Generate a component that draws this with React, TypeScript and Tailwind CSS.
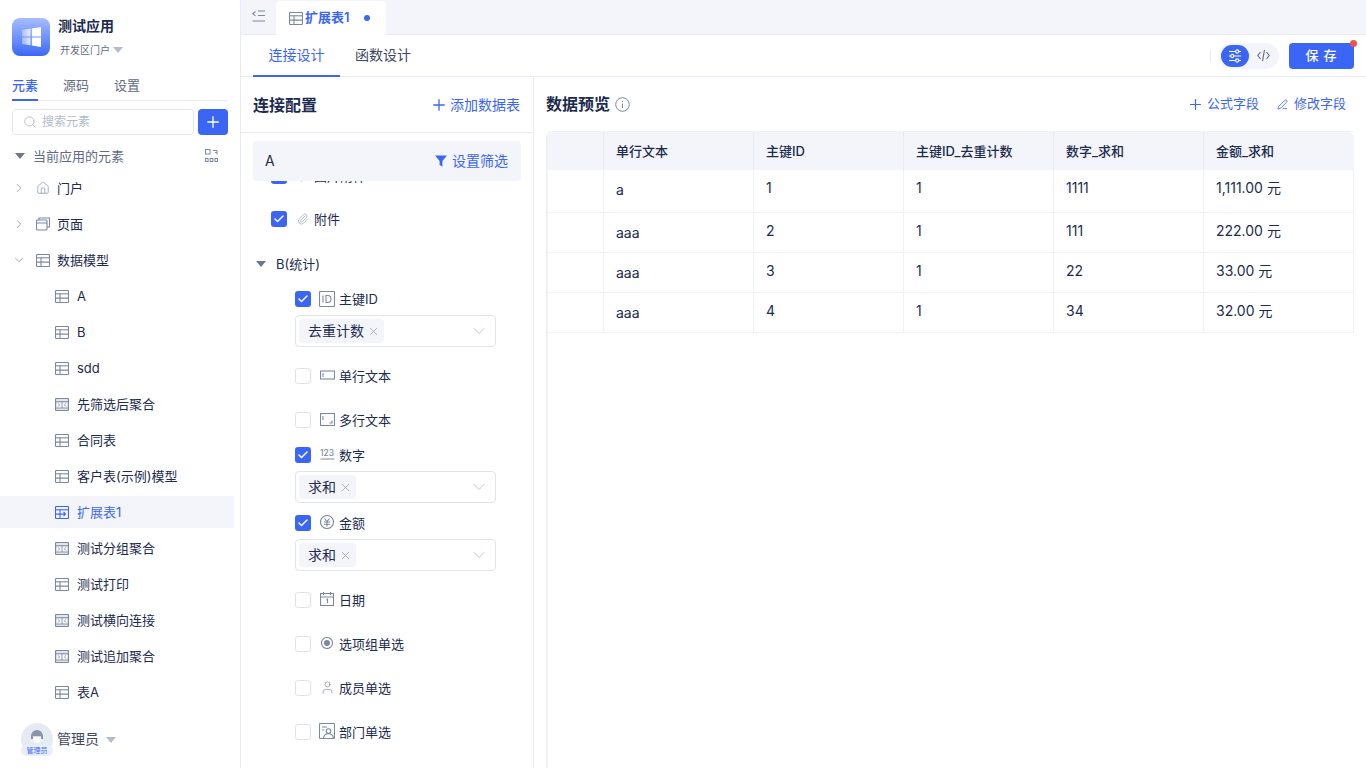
import { Check, ChevronDown, ChevronRight, Home, Paperclip, PenLine, Plus, Search, User, X } from "lucide-react";
import type { ReactNode } from "react";

type TableKind = "plain" | "merge" | "extend";

// small table glyph used all over the element tree
function TableIcon({ kind = "plain", className = "text-[#7c88a3]" }: { kind?: TableKind; className?: string }) {
  return (
    <svg width="14" height="13" viewBox="0 0 14 13" fill="none" stroke="currentColor" strokeWidth="1.1" className={className}>
      {kind === "merge" && <path d="M0 0h14v13H0z" fill="currentColor" fillOpacity="0.22" stroke="none" />}
      {kind === "merge" && <path d="M2 4h10v6H2z" fill="#fff" stroke="none" />}
      <rect x="0.5" y="0.5" width="13" height="12" rx="1" />
      <path d="M0.5 3.8h13" />
      {kind === "plain" && <path d="M5 3.8v8.7M0.5 8.1h13" />}
      {kind === "merge" && <path d="M0.5 10h13M3 5.3l1.6 1.6L3 8.5M7 3.8v6.2M11 5.3L9.4 6.9 11 8.5" strokeWidth="0.9" />}
      {kind === "extend" && <path d="M5 3.8v8.7M0.5 8.1h4.5M8.5 6l2 2.1-2 2.1M5 8.1h5.5" />}
    </svg>
  );
}

function Caret({ className = "" }: { className?: string }) {
  return (
    <svg width="10" height="6" viewBox="0 0 10 6" className={className}>
      <path d="M0 0h10L5 6z" fill="currentColor" />
    </svg>
  );
}

function WindowsLogo() {
  return (
    <div className="flex h-[38px] w-[38px] items-center justify-center rounded-[8px] bg-gradient-to-b from-[#a9bcfb] to-[#3d66f6]">
      <svg width="19" height="20" viewBox="0 0 19 20">
        <defs>
          <linearGradient id="win" x1="0" x2="1" y1="0" y2="0">
            <stop offset="0" stopColor="#fff" stopOpacity="0.35" />
            <stop offset="0.6" stopColor="#fff" />
          </linearGradient>
        </defs>
        <path d="M0 3l8.5-1.2v7.6H0zM9.8 1.6L19 0v9.4H9.8zM0 10.6h8.5v7.6L0 17zM9.8 10.6H19V20l-9.2-1.6z" fill="url(#win)" />
      </svg>
    </div>
  );
}

function PagesIcon() {
  return (
    <svg width="14" height="14" viewBox="0 0 14 14" fill="none" stroke="#7c88a3" strokeWidth="1.1">
      <rect x="0.5" y="3" width="10.5" height="10" rx="1" />
      <path d="M0.5 6h10.5M3 3V1h10.5v9H11" />
    </svg>
  );
}

function LayoutToggleIcon() {
  return (
    <svg width="13" height="14" viewBox="0 0 13 14" fill="none" stroke="#7c88a3" strokeWidth="1">
      <rect x="0.5" y="0.5" width="4.5" height="4.5" />
      <path d="M8 1.5h4v4M10 3.5h2" />
      <rect x="0.5" y="9.5" width="2.6" height="3" />
      <rect x="5.2" y="9.5" width="2.6" height="3" />
      <rect x="9.9" y="9.5" width="2.6" height="3" />
    </svg>
  );
}

function CollapseIcon() {
  return (
    <svg width="13" height="12" viewBox="0 0 13 12" fill="none" stroke="#7c88a3" strokeWidth="1.1">
      <path d="M6 1h7M6 5.5h7M0.5 11h12.5M3.5 1.5L0.8 3.7l2.7 2.2" />
    </svg>
  );
}

function SlidersIcon() {
  return (
    <svg width="14" height="14" viewBox="0 0 14 14" fill="none" stroke="currentColor" strokeWidth="1.1">
      <path d="M1 2.5h6.5M11 2.5h2M1 7h1.5M6 7h7M1 11.5h6.5M11 11.5h2" />
      <circle cx="9.2" cy="2.5" r="1.6" />
      <circle cx="4.2" cy="7" r="1.6" />
      <circle cx="9.2" cy="11.5" r="1.6" />
    </svg>
  );
}

function CodeIcon() {
  return (
    <svg width="13" height="13" viewBox="0 0 13 13" fill="none" stroke="#5f6b85" strokeWidth="1.1">
      <path d="M3.5 3L0.8 6.5 3.5 10M9.5 3l2.7 3.5L9.5 10M7.5 0.8l-2 11.4" />
    </svg>
  );
}

function Avatar() {
  return (
    <div className="relative h-8 w-8 rounded-full bg-[#e6eaf3]">
      <svg width="14" height="14" viewBox="0 0 14 14" className="absolute left-[9px] top-[6px]">
        <path d="M1 7a6 6 0 0 1 12 0v3h-2V7.5H3V10H1z" fill="#8a94a8" />
        <path d="M3 7.5h8V10a4 4 0 0 1-8 0z" fill="#fbfbfd" />
      </svg>
      <div className="absolute bottom-[-1px] left-0 flex h-[11px] w-8 items-center justify-center rounded-[5px] bg-[#e8eefd] text-[7px] leading-none text-[#3b66f5]">
        管理员
      </div>
    </div>
  );
}

const models: { name: string; kind: TableKind; active?: boolean }[] = [
  { name: "A", kind: "plain" },
  { name: "B", kind: "plain" },
  { name: "sdd", kind: "plain" },
  { name: "先筛选后聚合", kind: "merge" },
  { name: "合同表", kind: "plain" },
  { name: "客户表(示例)模型", kind: "plain" },
  { name: "扩展表1", kind: "extend", active: true },
  { name: "测试分组聚合", kind: "merge" },
  { name: "测试打印", kind: "plain" },
  { name: "测试横向连接", kind: "merge" },
  { name: "测试追加聚合", kind: "merge" },
  { name: "表A", kind: "plain" },
];

function RootRow({ icon, label, open }: { icon: ReactNode; label: string; open?: boolean }) {
  return (
    <div className="mb-1 flex h-8 items-center text-[13px] text-[#1c2b4f]">
      <div className="flex w-[36px] justify-end pr-[10px] text-[#7c88a3]">
        {open ? <ChevronDown size={14} strokeWidth={1.2} /> : <ChevronRight size={14} strokeWidth={1.2} />}
      </div>
      <div className="flex w-[21px] justify-start">{icon}</div>
      <span className="pt-px">{label}</span>
    </div>
  );
}

function Sidebar() {
  return (
    <aside className="flex h-full w-[241px] shrink-0 flex-col overflow-hidden border-r border-[#e8ebf3] bg-white">
      <div className="flex h-[74px] gap-2 pl-3 pt-[18px]">
        <WindowsLogo />
        <div>
          <div className="text-sm leading-4 font-semibold text-[#1c2b4f]">测试应用</div>
          <div className="mt-[9px] flex items-center gap-[3px] pl-[2px] text-[10px] leading-[14px] text-[#5f6b85]">
            开发区门户
            <Caret className="text-[#b3bccd]" />
          </div>
        </div>
      </div>
      <div className="mx-3 flex h-[27px] w-[216px] gap-[25px] border-b border-[#e8ebf3] text-[13px] leading-[18px] text-[#5f6b85]">
        <div className="h-[27px] border-b-2 border-[#3b66f5] pt-[2px] font-medium text-[#3b66f5]">元素</div>
        <div className="pt-[2px]">源码</div>
        <div className="pt-[2px]">设置</div>
      </div>
      <div className="mx-3 mt-2 flex h-[26px] w-[216px] gap-1">
        <div className="flex flex-1 items-center gap-[5px] rounded-[4px] border border-[#e3e7f0] pl-[10px] text-xs text-[#b2bacb]">
          <Search size={14} strokeWidth={1.1} className="text-[#9aa4b9]" />
          搜索元素
        </div>
        <div className="flex w-[30px] items-center justify-center rounded-[4px] bg-[#3b66f5] text-white">
          <Plus size={18} strokeWidth={1.8} />
        </div>
      </div>
      <div className="mt-[5px] flex h-8 items-center pl-[15px] pr-[22px] text-[13px] text-[#5f6b85]">
        <Caret className="text-[#6b7790]" />
        <span className="ml-2 flex-1 pt-px">当前应用的元素</span>
        <LayoutToggleIcon />
      </div>
      <div className="w-[234px]">
        <RootRow icon={<Home size={14} strokeWidth={1.1} className="text-[#7c88a3]" />} label="门户" />
        <RootRow icon={<PagesIcon />} label="页面" />
        <RootRow icon={<TableIcon />} label="数据模型" open />
        {models.map((m) => (
          <div
            key={m.name}
            className={`mb-1 flex h-8 items-center gap-2 pl-[55px] text-[13px] ${m.active ? "bg-[#f3f5fa] text-[#3b66f5]" : "text-[#1c2b4f]"}`}
          >
            <TableIcon kind={m.kind} className={m.active ? "text-[#3b66f5]" : "text-[#7c88a3]"} />
            <span className="pt-px">{m.name}</span>
          </div>
        ))}
      </div>
      <div className="mt-[11px] flex items-center pl-[21px] text-sm text-[#3c4760]">
        <Avatar />
        <span className="ml-1">管理员</span>
        <Caret className="ml-[7px] mt-[2px] text-[#b3bccd]" />
      </div>
    </aside>
  );
}

function Checkbox({ checked }: { checked?: boolean }) {
  return checked ? (
    <div className="flex h-4 w-4 shrink-0 items-center justify-center rounded-[3px] bg-[#3b66f5] text-white">
      <Check size={12} strokeWidth={3} />
    </div>
  ) : (
    <div className="h-4 w-4 shrink-0 rounded-[3px] border border-[#dfe3ed] bg-white" />
  );
}

function FieldIcon({ name }: { name: string }) {
  const line = { fill: "none", stroke: "#7c88a3", strokeWidth: 1.1 };
  switch (name) {
    case "id":
      return (
        <svg width="16" height="16" viewBox="0 0 16 16" {...line} className="mb-[1px]">
          <rect x="0.5" y="0.5" width="15" height="15" rx="1" />
          <path d="M4 4.5v7M7 4.5v7h1.8a3.2 3.5 0 0 0 0-7z" />
        </svg>
      );
    case "single":
      return (
        <svg width="15" height="10" viewBox="0 0 15 10" {...line} className="mb-[2px]">
          <rect x="0.5" y="1" width="14" height="8" />
          <path d="M3 3v4" />
        </svg>
      );
    case "multi":
      return (
        <svg width="15" height="13" viewBox="0 0 15 13" {...line} className="mb-[2px]">
          <rect x="0.5" y="0.5" width="14" height="12" />
          <path d="M3 3v4M9.5 10H12V7.5" />
        </svg>
      );
    case "number":
      return (
        <svg width="15" height="12" viewBox="0 0 15 12" className="mb-[2px]">
          <text x="0" y="7.5" fontSize="8.5" fontWeight="500" fill="#7c88a3" fontFamily="Inter">123</text>
          <path d="M0.5 11h14" stroke="#7c88a3" />
        </svg>
      );
    case "money":
      return (
        <svg width="14" height="14" viewBox="0 0 14 14" {...line} className="mb-[2px]">
          <circle cx="7" cy="7" r="6.5" />
          <path d="M4.5 3.5L7 6.5l2.5-3M4 7h6M4 9.3h6M7 6.5V11.5" />
        </svg>
      );
    case "date":
      return (
        <svg width="14" height="14" viewBox="0 0 14 14" {...line} className="mb-[2px]">
          <rect x="0.5" y="1.5" width="13" height="12" />
          <path d="M0.5 5h13M3.5 0v3M10.5 0v3M6.5 8l1-.8v4" />
        </svg>
      );
    case "radio":
      return (
        <svg width="12" height="12" viewBox="0 0 12 12" {...line} className="mb-[2px]">
          <circle cx="6" cy="6" r="5.5" />
          <circle cx="6" cy="6" r="3" fill="#7c88a3" stroke="none" />
        </svg>
      );
    case "user":
      return <User size={15} strokeWidth={1.1} className="mb-[2px] text-[#7c88a3]" />;
    default:
      return (
        <svg width="16" height="16" viewBox="0 0 16 16" {...line} className="mb-[2px]">
          <rect x="0.5" y="0.5" width="15" height="15" rx="1" />
          <path d="M3 4h5M3 7h2" />
          <circle cx="9.5" cy="8" r="2.3" />
          <path d="M4.5 15c.4-2.8 2.2-4.3 5-4.3s4.6 1.5 5 4.3" />
        </svg>
      );
  }
}

function AggSelect({ tag }: { tag: string }) {
  return (
    <div className="mt-1 flex h-8 w-[201px] items-center justify-between rounded-[4px] border border-[#e0e4ee] bg-white pl-[3px] pr-[6px]">
      <div className="flex h-6 items-center gap-[3px] rounded-[4px] bg-[#f3f5fa] pl-[9px] pr-1 text-sm text-[#1c2b4f]">
        {tag}
        <X size={13} strokeWidth={1.1} className="text-[#7c88a3]" />
      </div>
      <ChevronDown size={20} strokeWidth={0.9} className="text-[#a9b2c5]" />
    </div>
  );
}

const fields: { label: string; icon: string; checked?: boolean; tag?: string; mt: string }[] = [
  { label: "主键ID", icon: "id", checked: true, tag: "去重计数", mt: "mt-[11px]" },
  { label: "单行文本", icon: "single", mt: "mt-[17px]" },
  { label: "多行文本", icon: "multi", mt: "mt-5" },
  { label: "数字", icon: "number", checked: true, tag: "求和", mt: "mt-[11px]" },
  { label: "金额", icon: "money", checked: true, tag: "求和", mt: "mt-2" },
  { label: "日期", icon: "date", mt: "mt-[17px]" },
  { label: "选项组单选", icon: "radio", mt: "mt-5" },
  { label: "成员单选", icon: "user", mt: "mt-5" },
  { label: "部门单选", icon: "dept", mt: "mt-5" },
];

function ConnectionPanel() {
  return (
    <section className="flex w-[293px] shrink-0 flex-col overflow-hidden border-r border-[#e8ebf3]">
      <div className="flex h-[56px] shrink-0 items-center justify-between border-b border-[#e8ebf3] pl-3 pr-[13px]">
        <h2 className="text-base font-semibold text-[#1c2b4f]">连接配置</h2>
        <div className="flex items-center gap-[2px] text-sm text-[#3b66f5]">
          <Plus size={18} strokeWidth={1.7} />
          添加数据表
        </div>
      </div>
      <div className="min-h-0 flex-1 overflow-hidden">
        <div className="relative z-10 mx-3 mt-2 flex h-10 items-center justify-between rounded-[4px] bg-[#f3f5fa] pl-3 pr-[13px] text-sm text-[#1c2b4f]">
          A
          <div className="flex items-center gap-[5px] text-[#3b66f5]">
            <svg width="12" height="12" viewBox="0 0 12 12">
              <path d="M0 0.5h12L7.4 6v5.5L4.6 10V6z" fill="#3b66f5" />
            </svg>
            设置筛选
          </div>
        </div>
        <div className="mt-[-17px] flex h-6 items-center pl-[30px] text-[13px] text-[#1c2b4f]">
          <Checkbox checked />
          <Paperclip size={12} strokeWidth={1.1} className="ml-[10px] text-[#7c88a3]" />
          <span className="ml-[5px] pt-px">图片附件</span>
        </div>
        <div className="mt-[19px] flex h-6 items-center pl-[30px] text-[13px] text-[#1c2b4f]">
          <Checkbox checked />
          <Paperclip size={12} strokeWidth={1.1} className="ml-[10px] text-[#7c88a3]" />
          <span className="ml-[5px] pt-[2px]">附件</span>
        </div>
        <div className="mt-[21px] flex h-6 items-center pl-[15px] text-[13px] text-[#1c2b4f]">
          <Caret className="text-[#6b7790]" />
          <span className="ml-[10px] pt-px">B(统计)</span>
        </div>
        <div className="pl-[54px]">
          {fields.map((f) => (
            <div key={f.label} className={f.mt}>
              <div className="flex h-6 items-center text-[13px] text-[#1c2b4f]">
                <Checkbox checked={f.checked} />
                <div className="ml-2 flex w-4 items-center justify-center">
                  <FieldIcon name={f.icon} />
                </div>
                <span className="ml-1 pt-px">{f.label}</span>
              </div>
              {f.tag && <AggSelect tag={f.tag} />}
            </div>
          ))}
        </div>
      </div>
    </section>
  );
}

const columns = ["单行文本", "主键ID", "主键ID_去重计数", "数字_求和", "金额_求和"];
const rows = [
  ["a", "1", "1", "1111", "1,111.00 元"],
  ["aaa", "2", "1", "111", "222.00 元"],
  ["aaa", "3", "1", "22", "33.00 元"],
  ["aaa", "4", "1", "34", "32.00 元"],
];

function PreviewPanel() {
  return (
    <section className="flex min-w-0 flex-1 flex-col">
      <div className="flex h-[54px] shrink-0 items-center justify-between pl-3 pr-5">
        <div className="flex items-center gap-[5px]">
          <h2 className="text-base font-semibold text-[#1c2b4f]">数据预览</h2>
          <svg width="15" height="15" viewBox="0 0 15 15" fill="none" stroke="#7c88a3">
            <circle cx="7.5" cy="7.5" r="6.8" />
            <path d="M7.5 6.5v4.5M7.5 3.8V5" />
          </svg>
        </div>
        <div className="flex items-center gap-[18px] text-[13px] text-[#3b66f5]">
          <div className="flex items-center gap-[3px]">
            <Plus size={17} strokeWidth={1.7} />
            公式字段
          </div>
          <div className="flex items-center gap-[6px]">
            <PenLine size={11} strokeWidth={1.8} />
            修改字段
          </div>
        </div>
      </div>
      <div className="mx-3 flex-1 rounded-tl-[6px] border-l-2 border-t border-[#eef1f7]">
        <div className="grid h-[38px] grid-cols-[56px_150px_150px_150px_150px_150px] rounded-t-[6px] bg-[#f3f5fa] text-[13px] font-medium text-[#1c2b4f]">
          <div className="border-r border-[#e8ebf3]" />
          {columns.map((c) => (
            <div key={c} className="flex items-center border-r border-[#e8ebf3] pl-3 pt-px last:border-r-0">
              {c}
            </div>
          ))}
        </div>
        {rows.map((r, i) => (
          <div
            key={i}
            className={`grid grid-cols-[56px_150px_150px_150px_150px_150px] border-b border-[#eef1f7] text-sm text-[#1c2b4f] ${i === 0 ? "h-[43px]" : "h-10"}`}
          >
            <div className="border-r border-[#eef1f7]" />
            {r.map((v, j) => (
              <div key={j} className={`border-r border-[#eef1f7] pl-3 ${j === 0 ? "pt-[10px]" : "pt-2"}`}>
                {v}
              </div>
            ))}
          </div>
        ))}
      </div>
    </section>
  );
}

export default function App() {
  return (
    <div className="flex h-[768px] w-[1366px] overflow-hidden bg-white [font-family:Inter,'Noto_Sans_CJK_SC',sans-serif]">
      <Sidebar />
      <main className="flex min-w-0 flex-1 flex-col">
        <div className="flex h-[35px] shrink-0 border-b border-[#e8ebf3] bg-[#f3f5fa]">
          <div className="flex w-[35px] items-center justify-center pb-[2px]">
            <CollapseIcon />
          </div>
          <div className="relative mb-[-1px] mt-px flex h-[34px] w-[110px] items-center rounded-t-[4px] bg-white pl-[13px] text-[13px] font-semibold text-[#3b66f5]">
            <TableIcon className="text-[#7c88a3]" />
            <span className="ml-[2px]">扩展表1</span>
            <span className="ml-[14px] h-[6px] w-[6px] rounded-full bg-[#3b66f5]" />
          </div>
        </div>
        <div className="flex h-[42px] shrink-0 items-center justify-between border-b border-[#e8ebf3] pl-3 pr-3">
          <div className="flex h-full text-sm">
            <div className="flex h-[42px] w-[87px] items-center justify-center border-b-2 border-[#3b66f5] text-[#3b66f5]">连接设计</div>
            <div className="flex w-[86px] items-center justify-center pb-[2px] text-[#3c4760]">函数设计</div>
          </div>
          <div className="flex items-center">
            <div className="mr-2 h-3 w-px bg-[#e8ebf3]" />
            <div className="flex h-[26px] w-[60px] items-center rounded-full bg-[#f3f5fa] pl-[2px]">
              <div className="flex h-[22px] w-7 items-center justify-center rounded-full bg-[#3b66f5] text-white">
                <SlidersIcon />
              </div>
              <div className="ml-2">
                <CodeIcon />
              </div>
            </div>
            <div className="relative ml-[10px] flex h-[26px] w-[65px] items-center justify-center rounded-[4px] bg-[#3b66f5] pl-[4px] text-[13px] font-medium tracking-[5px] text-white">
              保存
              <span className="absolute right-[-3px] top-[-3px] h-[7px] w-[7px] rounded-full bg-[#f0524f]" />
            </div>
          </div>
        </div>
        <div className="flex min-h-0 flex-1">
          <ConnectionPanel />
          <PreviewPanel />
        </div>
      </main>
    </div>
  );
}
